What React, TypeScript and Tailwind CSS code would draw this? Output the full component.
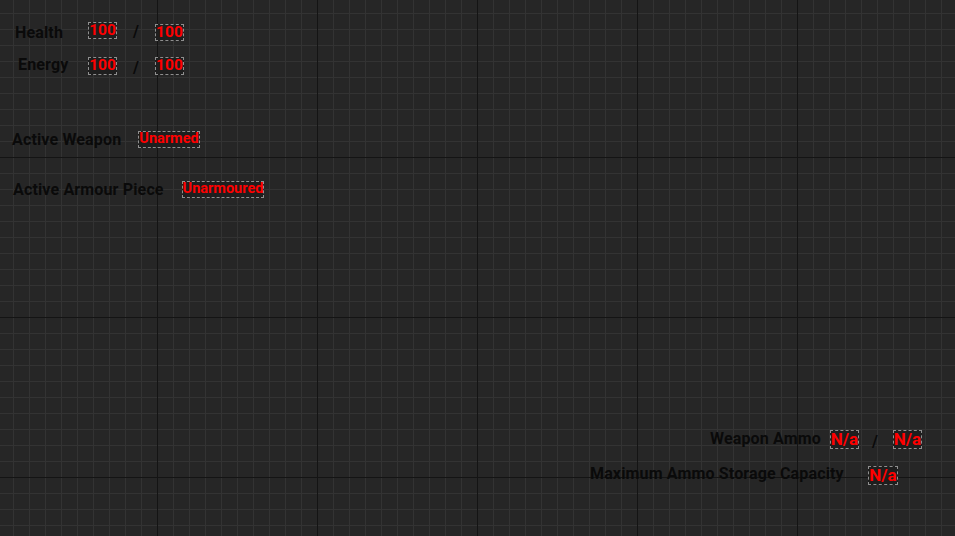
import React from 'react';

const Value: React.FC<{ text: string; className?: string }> = ({ text, className = '' }) => (
  <span
    className={`inline-flex items-center justify-center border border-dashed border-[#8f8f8f] bg-[#1e1e1e] text-[#ff0000] font-bold leading-none whitespace-nowrap ${className}`}
  >
    {text}
  </span>
);

const Label: React.FC<{ text: string; className?: string }> = ({ text, className = '' }) => (
  <span className={`text-[#0a0a0a] font-bold text-[16px] tracking-[0.15px] leading-none whitespace-nowrap ${className}`}>
    {text}
  </span>
);

const Slash: React.FC<{ className?: string }> = ({ className = '' }) => (
  <span className={`text-[#0a0a0a] font-bold text-[16px] leading-none ${className}`}>/</span>
);

const App: React.FC = () => {
  return (
    <div className="relative w-full h-[536px] overflow-hidden bg-[#262626] bg-[image:linear-gradient(to_right,#141414_1px,transparent_1px),linear-gradient(to_bottom,#141414_1px,transparent_1px),linear-gradient(to_right,#333333_1px,transparent_1px),linear-gradient(to_bottom,#333333_1px,transparent_1px)] bg-[size:160px_160px,160px_160px,16px_16px,16px_16px] bg-[position:157px_157px,157px_157px,13px_13px,13px_13px] font-['Roboto',sans-serif]">
      {/* Health */}
      <div className="absolute left-[15px] top-[22px] flex items-start">
        <Label text="Health" className="mt-[3px] w-[73px]" />
        <Value text="100" className="w-[29px] h-[17px] text-[15.5px]" />
        <Slash className="ml-[16px] mt-[2px]" />
        <Value text="100" className="ml-[16px] mt-[2px] w-[29px] h-[17px] text-[15.5px]" />
      </div>

      {/* Energy */}
      <div className="absolute left-[18px] top-[57px] flex items-start">
        <Label text="Energy" className="mt-[0px] w-[70px]" />
        <Value text="100" className="w-[29px] h-[18px] text-[15.5px]" />
        <Slash className="ml-[16px] mt-[3px]" />
        <Value text="100" className="ml-[16px] w-[29px] h-[18px] text-[15.5px]" />
      </div>

      {/* Active weapon */}
      <div className="absolute left-[12px] top-[130px] flex items-center">
        <Label text="Active Weapon" className="mt-[2px] w-[126px]" />
        <Value text="Unarmed" className="w-[62px] h-[17px] text-[14.5px]" />
      </div>

      {/* Active armour */}
      <div className="absolute left-[13px] top-[180px] flex items-center">
        <Label text="Active Armour Piece" className="mt-[2px] w-[169px]" />
        <Value text="Unarmoured" className="w-[82px] h-[17px] text-[14.5px]" />
      </div>

      {/* Weapon ammo */}
      <div className="absolute left-[710px] top-[430px] flex items-start">
        <Label text="Weapon Ammo" className="mt-[1px] w-[120px]" />
        <Value text="N/a" className="w-[29px] h-[19px] text-[17px]" />
        <Slash className="ml-[13px] mt-[4px]" />
        <Value text="N/a" className="ml-[15px] w-[29px] h-[19px] text-[17px]" />
      </div>

      {/* Max ammo storage */}
      <div className="absolute left-[590px] top-[466px] flex items-start">
        <Label text="Maximum Ammo Storage Capacity" className="mt-[0px] w-[278px]" />
        <Value text="N/a" className="w-[30px] h-[19px] text-[17px]" />
      </div>
    </div>
  );
};

export default App;
